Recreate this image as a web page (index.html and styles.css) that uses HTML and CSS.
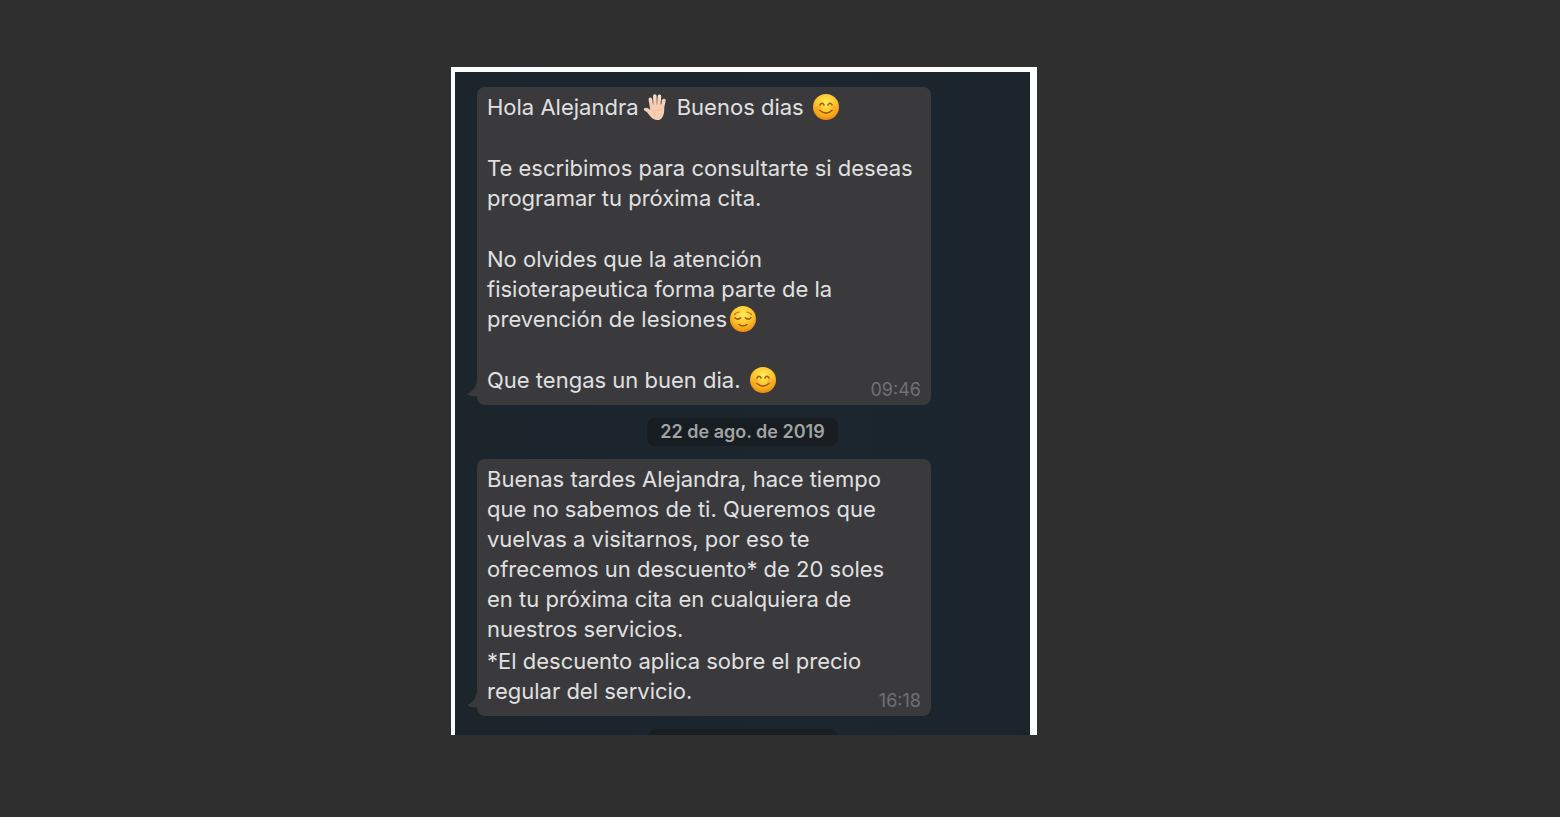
FILE: index.html
```
<!DOCTYPE html>
<html lang="es">
<head>
<meta charset="utf-8">
<meta name="viewport" content="width=device-width, initial-scale=1">
<title>Conversación</title>
<link rel="stylesheet" href="styles.css">
</head>
<body>
<svg class="defs" aria-hidden="true">
  <defs>
    <radialGradient id="face" cx="50%" cy="32%" r="68%">
      <stop offset="0" stop-color="#ffec5c"/>
      <stop offset="0.55" stop-color="#fdc52c"/>
      <stop offset="1" stop-color="#ee8a0c"/>
    </radialGradient>
    <linearGradient id="skin" x1="0" y1="0" x2="0" y2="1">
      <stop offset="0" stop-color="#f6dccb"/>
      <stop offset="1" stop-color="#f3c4a6"/>
    </linearGradient>
    <symbol id="smile" viewBox="0 0 28 28">
      <circle cx="14" cy="14" r="13" fill="url(#face)"/>
      <circle cx="6.500" cy="15.500" r="3" fill="#f58a1c" opacity=".35"/>
      <circle cx="21.500" cy="15.500" r="3" fill="#f58a1c" opacity=".35"/>
      <path d="M8 12q2-3.600 4 0M16 12q2-3.600 4 0M8 17.500q6 5.400 12 0" fill="none" stroke="#a15c0c" stroke-width="1.600" stroke-linecap="round"/>
    </symbol>
    <symbol id="relieved" viewBox="0 0 28 28">
      <circle cx="14" cy="14" r="13" fill="url(#face)"/>
      <path d="M5.500 9.500q2-2.400 4.800-2.500M22.500 9.500q-2-2.400-4.800-2.500" fill="none" stroke="#b8741a" stroke-width="1.200" stroke-linecap="round"/>
      <path d="M6 12.800q2.800 2.800 5.600 0M16.400 12.800q2.800 2.800 5.600 0M10 19.500q4 2.800 8 0" fill="none" stroke="#985610" stroke-width="1.500" stroke-linecap="round"/>
    </symbol>
    <symbol id="hand" viewBox="0 0 28 30">
      <path d="M10.800 18L9 6.800M14.200 16L13.800 3.200M17.800 16L18.800 3.600M21.400 18L23.600 8" fill="none" stroke="url(#skin)" stroke-linecap="round" stroke-width="3.800"/>
      <path d="M9 11L23.400 12Q24.800 19 22.800 24Q20.800 29 16.500 29Q12 29 9 25Q6 20 2.400 18.500Q1 17 3 16Q6 15.500 9.500 18.500Z" fill="#f6cfb3"/>
      <path d="M12.300 13L11.600 7M16 13L16.200 5M19.900 13L21.200 7" fill="none" stroke="#c58f71" stroke-width=".7"/>
      <path d="M11.500 19q3.500 2.500 2.500 7M14.500 18.500q4 0 7-1.500" fill="none" stroke="#e4ad8b" stroke-width=".7"/>
    </symbol>
  </defs>
</svg>
<main class="viewer">
  <section class="chat" aria-label="Conversación">
    <article class="bubble">
      <svg class="tail" viewBox="0 0 14 20" aria-hidden="true"><path d="M10 0Q9 9 0 13Q4 16 10 15L14 20V0Z"/></svg>
      <div class="message spaced">
        <p>Hola Alejandra<svg class="emoji" role="img" aria-label="mano"><use href="#hand"/></svg> Buenos dias <svg class="emoji" role="img" aria-label="sonrisa"><use href="#smile"/></svg></p>
        <p>Te escribimos para consultarte si deseas<br>programar tu próxima cita.</p>
        <p>No olvides que la atención<br>fisioterapeutica forma parte de la<br>prevención de lesiones<svg class="emoji" role="img" aria-label="alivio"><use href="#relieved"/></svg></p>
        <p>Que tengas un buen dia. <svg class="emoji" role="img" aria-label="sonrisa"><use href="#smile"/></svg></p>
      </div>
      <time class="time">09:46</time>
    </article>
    <p class="date">22 de ago. de 2019</p>
    <article class="bubble">
      <svg class="tail" viewBox="0 0 14 20" aria-hidden="true"><path d="M10 0Q9 9 0 13Q4 16 10 15L14 20V0Z"/></svg>
      <div class="message">
        <p>Buenas tardes Alejandra, hace tiempo<br>que no sabemos de ti. Queremos que<br>vuelvas a visitarnos, por eso te<br>ofrecemos un descuento* de 20 soles<br>en tu próxima cita en cualquiera de<br>nuestros servicios.</p>
        <p>*El descuento aplica sobre el precio<br>regular del servicio.</p>
      </div>
      <time class="time">16:18</time>
    </article>
    <div class="peek"></div>
  </section>
</main>
</body>
</html>
```
FILE: styles.css
```
* { box-sizing: border-box; }

body {
  margin: 0;
  background: #2f2f2f;
  font-family: Inter, Roboto, "Liberation Sans", sans-serif;
}

p { margin: 0; }

.defs {
  position: absolute;
  width: 0;
  height: 0;
}

.viewer {
  display: flex;
  justify-content: center;
  align-items: flex-start;
  min-height: 100vh;
  padding: 67px 72px 16px 0;
}

.chat {
  display: flex;
  flex-direction: column;
  width: 100%;
  max-width: 586px;
  padding: 15px 22px 0;
  border: solid #fbfdfe;
  border-width: 5px 7px 0 4px;
  background: linear-gradient(90deg, #1c242c, #1b262e 60%, #1c252d);
}

.bubble {
  position: relative;
  width: 100%;
  max-width: 454px;
  padding: 5px 10px 10px;
  border-radius: 8px;
  background: #3a3a3c;
  color: #e0e0e1;
}

.tail {
  position: absolute;
  left: -10px;
  bottom: 4px;
  width: 14px;
  height: 20px;
  fill: #3a3a3c;
}

.message {
  display: flex;
  flex-direction: column;
  gap: 2px;
  font-size: 22px;
  line-height: 30px;
}

.spaced { gap: 31px; }

.emoji {
  width: 28px;
  height: 28px;
  margin: 0 2px;
  vertical-align: -6px;
}

.time {
  position: absolute;
  right: 10px;
  bottom: 5px;
  color: #707073;
  font-size: 18px;
  line-height: 20px;
}

.date {
  align-self: center;
  margin: 13px 0;
  padding: 0 13px;
  border-radius: 8px;
  background: #171d20;
  color: #a0a3a5;
  font-size: 18px;
  font-weight: 600;
  line-height: 28px;
}

.peek {
  align-self: center;
  width: 188px;
  height: 6px;
  margin-top: 13px;
  border-radius: 6px 6px 0 0;
  background: #191f20;
}
```
